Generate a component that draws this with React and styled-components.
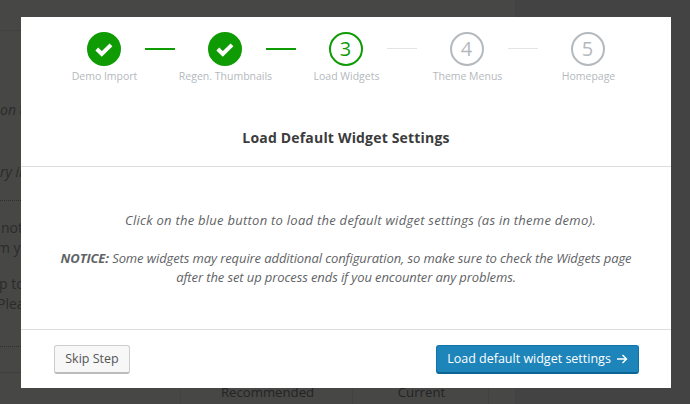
import React from "react";
import styled, { createGlobalStyle } from "styled-components";

const Global = createGlobalStyle`
  html, body { margin: 0; padding: 0; background: #434343; }
`;

const font = `"Open Sans", "Noto Sans", "Liberation Sans", sans-serif`;

const Page = styled.div`
  position: relative;
  width: 690px;
  height: 404px;
  overflow: hidden;
  background: #434343;
  font-family: ${font};
`;

const Backdrop = styled.div`
  width: 516px;
  height: 404px;
  display: flex;
  flex-direction: column;
  background: #474746;
  border-right: 1px solid #424242;
  box-sizing: border-box;
  padding-top: 30px;
`;

const BackText = styled.div`
  width: 21px;
  height: 342px;
  overflow: hidden;
  box-sizing: border-box;
  padding-top: 69px;
  border-top: 1px solid #414141;
  flex: none;
`;

const Fragment = styled.div`
  height: 20px;
  line-height: 20px;
  font-size: 14px;
  color: #2b2b2b;
  white-space: nowrap;
  font-style: ${(p) => (p.$italic ? "italic" : "normal")};
  margin-top: ${(p) => p.$gap || 0}px;
  margin-left: ${(p) => p.$shift || 0}px;
`;

const Dots = styled.div`
  border-top: 1px dotted #2e2e2e;
  margin-top: ${(p) => p.$gap || 0}px;
`;

const BackTable = styled.div`
  display: grid;
  grid-template-columns: 181px 172px 136px 26px;
  height: 32px;
  border-top: 1px solid #3f3f3f;
  font-size: 13.2px;
  color: #242424;
`;

const BackCell = styled.div`
  padding: 9px 0 0 2px;
  text-align: center;
  line-height: 20px;
  border-right: 1px solid #424242;
  &:last-child { border-right: 0; }
`;

const Modal = styled.div`
  position: absolute;
  left: 21px;
  top: 17px;
  width: 650px;
  height: 371px;
  background: #fff;
  display: flex;
  flex-direction: column;
`;

const Steps = styled.ol`
  list-style: none;
  margin: 0;
  padding: 15px 0 0 22px;
  display: flex;
  height: 90px;
  box-sizing: border-box;
`;

const Step = styled.li`
  position: relative;
  width: 121px;
  display: flex;
  flex-direction: column;
  align-items: center;
`;

const Circle = styled.div`
  width: 34px;
  height: 34px;
  box-sizing: border-box;
  border-radius: 50%;
  display: flex;
  align-items: center;
  justify-content: center;
  font-size: 20px;
  line-height: 1;
  border: 2px solid ${(p) => (p.$state === "todo" ? "#b4b9be" : "#0f9b04")};
  background: ${(p) => (p.$state === "done" ? "#0f9b04" : "#fff")};
  color: ${(p) => (p.$state === "todo" ? "#b4b9be" : "#0f9b04")};
  font-weight: 400;
`;

const StepLabel = styled.div`
  margin: 3px 0 0 2px;
  font-size: 10.5px;
  line-height: 15px;
  color: #b4b9be;
  white-space: nowrap;
`;

const Connector = styled.div`
  position: absolute;
  left: 102px;
  top: 16px;
  width: 30px;
  height: ${(p) => (p.$done ? 2 : 1)}px;
  background: ${(p) => (p.$done ? "#0f9b04" : "#e3e4e5")};
`;

const Header = styled.div`
  height: 60px;
  box-sizing: border-box;
  border-bottom: 1px solid #ddd;
  display: flex;
  justify-content: center;
  padding-top: 21px;
`;

const Title = styled.h2`
  margin: 0;
  font-size: 14px;
  line-height: 20px;
  font-weight: 700;
  letter-spacing: 0.18px;
  color: #3c3c3c;
`;

const Body = styled.div`
  flex: 1;
  padding: 44px 36px 0;
  text-align: center;
  font-size: 13px;
  line-height: 19px;
  font-style: italic;
  color: #5f6366;
`;

const Para = styled.p`
  margin: 0 0 19px;
  padding-left: ${(p) => p.$indent || 0}px;
  letter-spacing: ${(p) => p.$tracking || 0}px;
`;

const Notice = styled.strong`
  font-weight: 700;
`;

const Footer = styled.div`
  height: 59px;
  box-sizing: border-box;
  border-top: 1px solid #ddd;
  padding: 15px 32px 0 33px;
  display: flex;
  justify-content: space-between;
  align-items: flex-start;
`;

const Button = styled.button`
  height: 29px;
  box-sizing: border-box;
  padding: 0 10px;
  border-radius: 3px;
  font-family: ${font};
  font-size: 12.5px;
  line-height: 26px;
  white-space: nowrap;
  display: inline-flex;
  align-items: center;
  gap: 5px;
`;

const SkipButton = styled(Button)`
  width: 76px;
  justify-content: center;
  background: #f7f7f7;
  border: 1px solid #cdcdcd;
  border-bottom-color: #bcbcbc;
  border-bottom-width: 2px;
  color: #555;
`;

const PrimaryButton = styled(Button)`
  width: 203px;
  justify-content: center;
  background: #1e85bb;
  border: 1px solid #0e73a8;
  border-bottom-color: #0a6595;
  border-bottom-width: 2px;
  color: #fff;
`;

const Check = () => (
  <svg width="20" height="20" viewBox="0 0 20 20" fill="none">
    <path d="M2.8 10 L7.8 15 L17 5.8" stroke="#fff" strokeWidth="4" strokeLinejoin="miter" />
  </svg>
);

const Arrow = () => (
  <svg width="12" height="12" viewBox="0 0 12 12" fill="none">
    <path d="M1 6H10.5M6.5 2L10.5 6L6.5 10" stroke="#fff" strokeWidth="1.4" />
  </svg>
);

const steps = [
  { label: "Demo Import", state: "done" },
  { label: "Regen. Thumbnails", state: "done" },
  { label: "Load Widgets", state: "current", n: 3 },
  { label: "Theme Menus", state: "todo", n: 4 },
  { label: "Homepage", state: "todo", n: 5 },
];

export default function App() {
  return (
    <Page>
      <Global />
      <Backdrop>
        <BackText>
          <Fragment $italic>on t</Fragment>
          <Fragment $gap={42} $italic>ry in</Fragment>
          <Dots $gap={18} />
          <Fragment $gap={17} $shift={1}>not</Fragment>
          <Fragment $shift={-3}>m y</Fragment>
          <Fragment $gap={16} $shift={-1}>p to</Fragment>
          <Fragment $shift={-3}>Plea</Fragment>
          <Dots $gap={32} />
        </BackText>
        <BackTable>
          <BackCell />
          <BackCell>Recommended</BackCell>
          <BackCell>Current</BackCell>
          <BackCell />
        </BackTable>
      </Backdrop>
      <Modal>
        <Steps>
          {steps.map((s, i) => (
            <Step key={s.label}>
              <Circle $state={s.state}>{s.state === "done" ? <Check /> : s.n}</Circle>
              <StepLabel>{s.label}</StepLabel>
              {i < 4 && <Connector $done={i < 2} />}
            </Step>
          ))}
        </Steps>
        <Header>
          <Title>Load Default Widget Settings</Title>
        </Header>
        <Body>
          <Para $indent={29} $tracking={0.26}>Click on the blue button to load the default widget settings (as in theme demo).</Para>
          <Para $tracking={-0.1}>
            <Notice>NOTICE:</Notice> Some widgets may require additional configuration, so make sure to check the Widgets page after the set up process ends if you encounter any problems.
          </Para>
        </Body>
        <Footer>
          <SkipButton>Skip Step</SkipButton>
          <PrimaryButton>Load default widget settings <Arrow /></PrimaryButton>
        </Footer>
      </Modal>
    </Page>
  );
}
